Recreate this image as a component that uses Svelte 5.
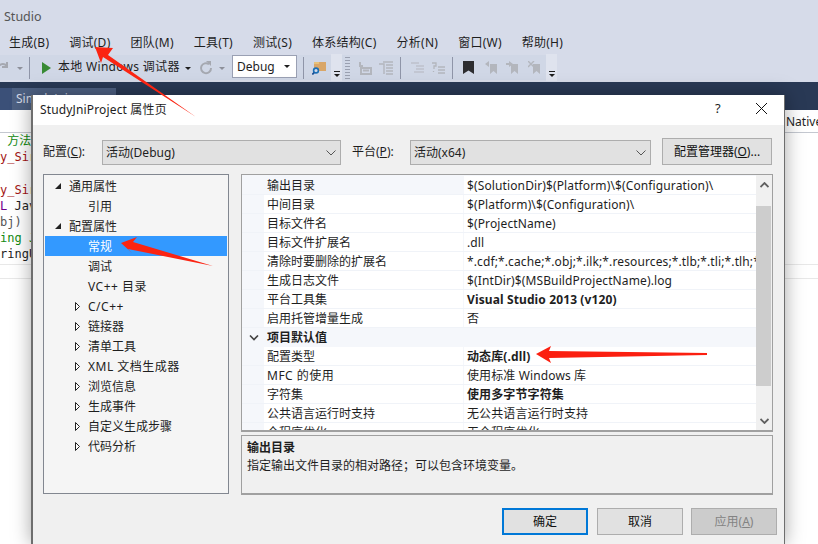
<script>
  const menus = ['生成(B)', '调试(D)', '团队(M)', '工具(T)', '测试(S)', '体系结构(C)', '分析(N)', '窗口(W)', '帮助(H)'];
  const code = [
    { t: ' 方法', c: 'green' }, { t: 'y_Sir', c: 'brown' }, { t: ' ', c: '' }, { t: 'y_Sir', c: 'brown' },
    { t: 'L Jav', c: 'mixed' }, { t: 'bj)', c: 'gray' }, { t: 'ing J', c: 'green' }, { t: 'ringU', c: '' }
  ];
  const tree = [
    { t: '通用属性', lv: 1, a: 'open' }, { t: '引用', lv: 2 }, { t: '配置属性', lv: 1, a: 'open' },
    { t: '常规', lv: 2, cur: true }, { t: '调试', lv: 2 }, { t: 'VC++ 目录', lv: 2, wide: true },
    { t: 'C/C++', lv: 2, a: 'closed', wide: true }, { t: '链接器', lv: 2, a: 'closed' }, { t: '清单工具', lv: 2, a: 'closed' },
    { t: 'XML 文档生成器', lv: 2, a: 'closed', wide: true }, { t: '浏览信息', lv: 2, a: 'closed' }, { t: '生成事件', lv: 2, a: 'closed' },
    { t: '自定义生成步骤', lv: 2, a: 'closed' }, { t: '代码分析', lv: 2, a: 'closed' }
  ];
  const props = [
    { k: '输出目录', v: '$(SolutionDir)$(Platform)\\$(Configuration)\\', focus: true },
    { k: '中间目录', v: '$(Platform)\\$(Configuration)\\' },
    { k: '目标文件名', v: '$(ProjectName)' },
    { k: '目标文件扩展名', v: '.dll' },
    { k: '清除时要删除的扩展名', v: '*.cdf;*.cache;*.obj;*.ilk;*.resources;*.tlb;*.tli;*.tlh;*.tmp;*.rsp;*.pgc' },
    { k: '生成日志文件', v: '$(IntDir)$(MSBuildProjectName).log' },
    { k: '平台工具集', v: 'Visual Studio 2013 (v120)', bold: true },
    { k: '启用托管增量生成', v: '否' },
    { head: '项目默认值' },
    { k: '配置类型', v: '动态库(.dll)', bold: true },
    { k: 'MFC 的使用', v: '使用标准 Windows 库', wide: true },
    { k: '字符集', v: '使用多字节字符集', bold: true },
    { k: '公共语言运行时支持', v: '无公共语言运行时支持' },
    { k: '全程序优化', v: '无全程序优化' }
  ];
</script>

<div class="app">
  <div class="title">Studio</div>
  <nav class="menu">
    {#each menus as m}<span>{m}</span>{/each}
  </nav>
  <div class="toolbar">
    <i class="tbg"></i>
    <svg class="ti" width="14" height="14" viewBox="0 0 14 14"><path d="M0 11 A6 6 0 0 1 10 5 M10 1 V6 H5" fill="none" stroke="#a5a8b0" stroke-width="2"/></svg>
    <i class="caret gray c1"></i>
    <i class="sep s1"></i>
    <svg class="play" width="9" height="12" viewBox="0 0 9 12"><path d="M0 0 L9 6 L0 12Z" fill="#388a34"/></svg>
    <span class="run">本地 Windows 调试器</span>
    <i class="caret c2"></i>
    <svg class="reload" width="14" height="14" viewBox="0 0 14 14"><path d="M10 3.2 A5 5 0 1 0 12 7" fill="none" stroke="#a5a8b0" stroke-width="2"/><path d="M7 0 L12 0 L12 5Z" fill="#a5a8b0"/></svg>
    <i class="caret gray c3"></i>
    <div class="debug"><span>Debug</span><i class="caret"></i></div>
    <i class="sep s2"></i>
    <svg class="folder" width="15" height="15" viewBox="0 0 15 15"><path d="M2 2 H14 V11 H2Z" fill="#d9a668"/><path d="M2 2 H7 V4 H2Z" fill="#e8c27a"/><circle cx="4" cy="10.5" r="2.4" fill="#d6dbe9" stroke="#1b6fb5" stroke-width="1.6"/><path d="M2.2 12.5 L0.3 14.5" stroke="#1b4f95" stroke-width="1.8"/></svg>
    <div class="over o1"><i class="bar"></i><i class="caret"></i></div>
    <i class="grip"></i>
    <svg class="tg g1" width="14" height="14" viewBox="0 0 14 14"><path d="M2 0 V4 H5 M3 6 H13 V12 H3Z M5 8.5 H11" fill="none" stroke="#b3b6bd" stroke-width="2"/></svg>
    <svg class="tg g2" width="15" height="14" viewBox="0 0 15 14"><path d="M4 1 H14 M7 4 H14 M7 7 H14 M7 10 H14 M7 13 H14 M0 3 H5 V13" fill="none" stroke="#b3b6bd" stroke-width="1.4"/></svg>
    <i class="sep s3"></i>
    <svg class="tg g3" width="13" height="12" viewBox="0 0 13 12"><path d="M0 1 H8 M5 4 H13 M5 7 H13 M3 10 H13" stroke="#b3b6bd" stroke-width="1.2"/></svg>
    <svg class="tg g4" width="13" height="13" viewBox="0 0 13 13"><path d="M0 1 H4 V4 H2 V7 M6 5 H13 M6 8 H13 M6 11 H13 M1.5 9 V10" fill="none" stroke="#b3b6bd" stroke-width="1.3"/></svg>
    <i class="sep s4"></i>
    <svg class="tg g5" width="11" height="13" viewBox="0 0 11 13"><path d="M0 0 H11 V13 L5.5 9.5 L0 13Z" fill="#2d2d30"/></svg>
    <svg class="tg g6" width="12" height="13" viewBox="0 0 12 13"><path d="M5 3 H12 V13 L8.5 10 L5 13Z M0 3 L4 0 V6Z" fill="#b3b6bd"/></svg>
    <svg class="tg g7" width="12" height="13" viewBox="0 0 12 13"><path d="M5 3 H12 V13 L8.5 10 L5 13Z M3 0 L7 3 L3 6Z M0 2 H4 V4 H0Z" fill="#b3b6bd"/></svg>
    <svg class="tg g8" width="12" height="13" viewBox="0 0 12 13"><path d="M5 3 H12 V13 L8.5 10 L5 13Z" fill="#b3b6bd"/><path d="M0 0 L6 6 M6 0 L0 6" stroke="#b3b6bd" stroke-width="1.4"/></svg>
    <div class="over o2"><i class="bar"></i><i class="caret"></i></div>
  </div>
  <div class="band"><div class="tabl"></div><div class="tab">SimpleJni</div></div>
  <div class="editor">
    <div class="nativetab"><span>Native</span></div>
    <div class="code">
      {#each code as l}
        <div class={l.c}>{#if l.c === 'mixed'}<b>L</b> Jav{:else}{l.t}{/if}</div>
      {/each}
    </div>
    <div class="strip"></div>
  </div>

  <section class="dialog">
    <header>
      <span class="dtitle">StudyJniProject 属性页</span>
      <span class="help">?</span>
      <svg class="close" width="11" height="11" viewBox="0 0 11 11"><path d="M0 0 L11 11 M11 0 L0 11" stroke="#111" stroke-width="1"/></svg>
    </header>
    <div class="dbody">
      <div class="cfg">
        <span class="lbl">配置(<u>C</u>):</span>
        <div class="combo s-a"><span>活动(Debug)</span><svg width="10" height="6" viewBox="0 0 10 6"><path d="M0.5 0.5 L5 5 L9.5 0.5" fill="none" stroke="#555"/></svg></div>
        <span class="lbl lbl2">平台(<u>P</u>):</span>
        <div class="combo s-b"><span>活动(x64)</span><svg width="10" height="6" viewBox="0 0 10 6"><path d="M0.5 0.5 L5 5 L9.5 0.5" fill="none" stroke="#555"/></svg></div>
        <button class="mgr">配置管理器(<u>O</u>)...</button>
      </div>
      <div class="main">
        <div class="tree">
          {#each tree as n}
            <div class="node" class:cur={n.cur} class:child={n.lv === 2} class:wide={n.wide}>
              {#if n.a === 'open'}
                <svg class="arr" width="6" height="6" viewBox="0 0 6 6"><path d="M6 0 V6 H0Z" fill="#222"/></svg>
              {:else if n.a === 'closed'}
                <svg class="arr" width="5" height="9" viewBox="0 0 5 9"><path d="M0.5 0.5 L4.5 4.5 L0.5 8.5Z" fill="#fff" stroke="#222"/></svg>
              {/if}
              <span>{n.t}</span>
            </div>
          {/each}
        </div>
        <div class="side">
          <div class="grid">
            <div class="rows">
              {#each props as p}
                {#if p.head}
                  <div class="head"><svg width="10" height="6" viewBox="0 0 10 6"><path d="M1 0.5 L5 4.5 L9 0.5" fill="none" stroke="#444" stroke-width="1.6"/></svg><span>{p.head}</span></div>
                {:else}
                  <div class="row">
                    <div class="k" class:focus={p.focus} class:wide={p.wide}>{p.k}</div>
                    <div class="v" class:bold={p.bold}>{p.v}</div>
                  </div>
                {/if}
              {/each}
            </div>
            <div class="scroll">
              <svg width="9" height="6" viewBox="0 0 9 6"><path d="M0.5 5 L4.5 1 L8.5 5" fill="none" stroke="#606060" stroke-width="1.8"/></svg>
              <div class="thumb"></div>
              <svg width="9" height="6" viewBox="0 0 9 6"><path d="M0.5 1 L4.5 5 L8.5 1" fill="none" stroke="#606060" stroke-width="1.8"/></svg>
            </div>
          </div>
          <div class="desc">
            <strong>输出目录</strong>
            <p>指定输出文件目录的相对路径；可以包含环境变量。</p>
          </div>
        </div>
      </div>
      <div class="btns">
        <button class="primary">确定</button>
        <button>取消</button>
        <button class="dis">应用(<u>A</u>)</button>
      </div>
    </div>
  </section>

  <svg class="arrows" width="818" height="544" viewBox="0 0 818 544">
    <path d="M95 47 L113 48 L108 55 L196 117 L103 57 L101 63Z" fill="#fb2412"/>
    <path d="M121 243 L137 237 L133 242 L213 266 L128 249 L132 253Z" fill="#fb2412"/>
    <path d="M536 354 L551 346 L549 351 L707 353 L707 355 L549 358 L551 363Z" fill="#fb1f10"/>
  </svg>
</div>

<style>
  :global(body) { margin: 0; }
  .app {
    position: relative; width: 818px; height: 544px; overflow: hidden;
    background: #d6dbe9; color: #1e1e1e;
    font: 12px/16px "Noto Sans", "Noto Sans CJK SC", sans-serif;
  }
  .title { height: 33px; padding: 8px 0 0 4px; box-sizing: border-box; font-size: 12.5px; color: #555; line-height: 18px; }
  .menu { height: 20px; display: flex; gap: 20px; padding-left: 9px; align-items: center; line-height: 20px; letter-spacing: .25px; }
  .toolbar { position: relative; height: 29px; }
  .toolbar > * { position: absolute; }
  .tbg { left: 0; top: 2px; width: 546px; height: 25px; background: #d0d7e6; }
  .ti { left: -3px; top: 8px; }
  .caret { display: inline-block; width: 0; height: 0; border: 3px solid transparent; border-top: 3px solid #1e1e1e; border-bottom: 0; }
  .caret.gray { border-top-color: #8d909a; }
  .c1 { left: 17px; top: 14px; }
  .c2 { left: 185px; top: 14px; }
  .c3 { left: 219px; top: 14px; }
  .sep { width: 1px; height: 22px; background: #8f95a8; top: 4px; }
  .s1 { left: 29px; } .s2 { left: 303px; } .s3 { left: 400px; } .s4 { left: 452px; }
  .play { left: 42px; top: 9px; }
  .run { left: 58px; top: 6px; font-size: 12px; line-height: 16px; white-space: nowrap; letter-spacing: .3px; }
  .reload { left: 199px; top: 8px; }
  .debug {
    left: 232px; top: 2px; width: 65px; height: 23px; box-sizing: border-box; background: #fff; border: 1px solid #9aa0b3;
    display: flex; align-items: center; justify-content: space-between; padding: 0 6px 0 4px; font-size: 12px;
  }
  .folder { left: 312px; top: 7px; }
  .over { width: 11px; height: 27px; background: #dfe3ee; }
  .over .bar { position: absolute; left: 3px; top: 17px; width: 6px; height: 1px; background: #1e1e1e; }
  .over .caret { position: absolute; left: 3px; top: 20px; }
  .o1 { left: 331px; top: 1px; }
  .o2 { left: 546px; top: 1px; }
  .grip { left: 345px; top: 4px; width: 5px; height: 22px; background: repeating-linear-gradient(#9aa0b0 0 1px, transparent 1px 3px); }
  .g1 { left: 358px; top: 9px; } .g2 { left: 379px; top: 8px; }
  .g3 { left: 411px; top: 9px; } .g4 { left: 432px; top: 9px; }
  .g5 { left: 463px; top: 8px; } .g6 { left: 485px; top: 8px; }
  .g7 { left: 506px; top: 8px; } .g8 { left: 528px; top: 8px; }
  .band { height: 28px; background: #293955; display: flex; align-items: flex-end; }
  .tabl { width: 12px; height: 22px; background: #3b5078; }
  .tab { width: 104px; height: 22px; background: #4d6082; color: #d5dae6; padding-left: 4px; box-sizing: border-box; line-height: 22px; overflow: hidden; }
  .editor { position: relative; height: 434px; background: #fff; }
  .nativetab { height: 22px; border-bottom: 1px solid #c4c8d0; position: relative; }
  .nativetab span { position: absolute; left: 786px; top: 4px; white-space: nowrap; }
  .code { font: 12px/16.2px "DejaVu Sans Mono", "Noto Sans CJK SC", monospace; white-space: pre; }
  .code > div { height: 16.2px; }
  .green { color: #118a11; } .brown { color: #a31515; } .gray { color: #555; }
  .mixed b { font-weight: 400; color: #6f008a; }
  .strip { margin-top: 1px; height: 13px; border-top: 1px solid #e8e8e8; border-bottom: 1px solid #e8e8e8; }

  .dialog {
    position: absolute; left: 31px; top: 95px; width: 754px; height: 449px; box-sizing: border-box;
    background: #f0f0f0; border: solid #6e6e6e; border-width: 0 1px 0 2px;
    box-shadow: 0 0 18px rgba(0,0,0,.35);
  }
  header { height: 30px; background: #fff; display: flex; align-items: center; padding-left: 7px; position: relative; }
  .dtitle { flex: 1; font-size: 12px; letter-spacing: .15px; }
  .help { position: absolute; left: 682px; top: 5px; font-size: 13px; }
  .close { position: absolute; left: 723px; top: 8px; }
  .dbody { padding: 13px 0 0 10px; }
  .cfg { display: flex; align-items: center; height: 27px; }
  .lbl { width: 59px; margin-top: 1px; }
  .lbl2 { width: 58px; }
  u { text-underline-offset: 1px; }
  .combo {
    height: 25px; box-sizing: border-box; margin-top: 2px; background: #e1e1e1; border: 1px solid #adadad;
    display: flex; align-items: center; justify-content: space-between; padding: 0 4px 0 3px;
  }
  .s-a { width: 239px; margin-right: 11px; }
  .s-b { width: 241px; margin-right: 11px; }
  button {
    font: inherit; color: #111; background: #e1e1e1; border: 1px solid #adadad; padding: 0; height: 27px; width: 86px;
  }
  .mgr { width: 110px; }
  .main { display: flex; gap: 12px; margin-top: 9px; }
  .tree { width: 186px; height: 320px; box-sizing: border-box; background: #f5f5f5; border: 1px solid #828790; padding: 1px; }
  .node { height: 20px; position: relative; padding-left: 24px; line-height: 21px; white-space: nowrap; }
  .node.child { padding-left: 43px; }
  .node.cur { background: #3399ff; color: #fff; }
  .wide { letter-spacing: .5px; }
  .arr { position: absolute; left: 10px; top: 7px; }
  .node.child .arr { left: 30px; top: 6px; }
  .side { width: 532px; }
  .grid { height: 258px; box-sizing: border-box; border: 1px solid #a0a0a0; border-bottom-width: 2px; background: #fff; display: flex; overflow: hidden; }
  .rows { flex: 1; min-width: 0; padding-top: 1px; overflow: hidden; background: #f5f7fb; }
  .row { height: 19px; display: flex; border-bottom: 1px solid #f0f3f8; box-sizing: border-box; }
  .k { width: 199px; margin-left: 22px; background: #fff; padding-left: 3px; box-sizing: border-box; line-height: 20px; white-space: nowrap; overflow: hidden; }
  .k.focus { background: #f5f7fb; }
  .v { flex: 1; min-width: 0; margin-left: 1px; background: #fff; padding-left: 3px; line-height: 20px; white-space: nowrap; overflow: hidden; letter-spacing: .12px; }
  .bold { font-weight: 700; }
  .head { height: 19px; display: flex; align-items: center; font-weight: 700; padding-left: 7px; gap: 8px; line-height: 18px; }
  .scroll { width: 16px; background: #f0f0f0; display: flex; flex-direction: column; align-items: center; justify-content: space-between; padding: 7px 0 6px; box-sizing: border-box; position: relative; }
  .thumb { position: absolute; left: 0; top: 31px; width: 15px; height: 180px; background: #cdcdcd; }
  .desc { margin-top: 3px; height: 60px; box-sizing: border-box; border: 1px solid #a0a0a0; border-bottom-width: 2px; padding: 3px 5px; }
  .desc strong { display: block; font-weight: 700; line-height: 17px; }
  .desc p { margin: 1px 0 0; line-height: 18px; }
  .btns { display: flex; gap: 9px; margin: 13px 0 0 459px; }
  .primary { border: 2px solid #0078d7; }
  .dis { background: #ccc; color: #838383; width: 86px; margin-left: -1px; }
  .arrows { position: absolute; left: 0; top: 0; pointer-events: none; }
</style>
